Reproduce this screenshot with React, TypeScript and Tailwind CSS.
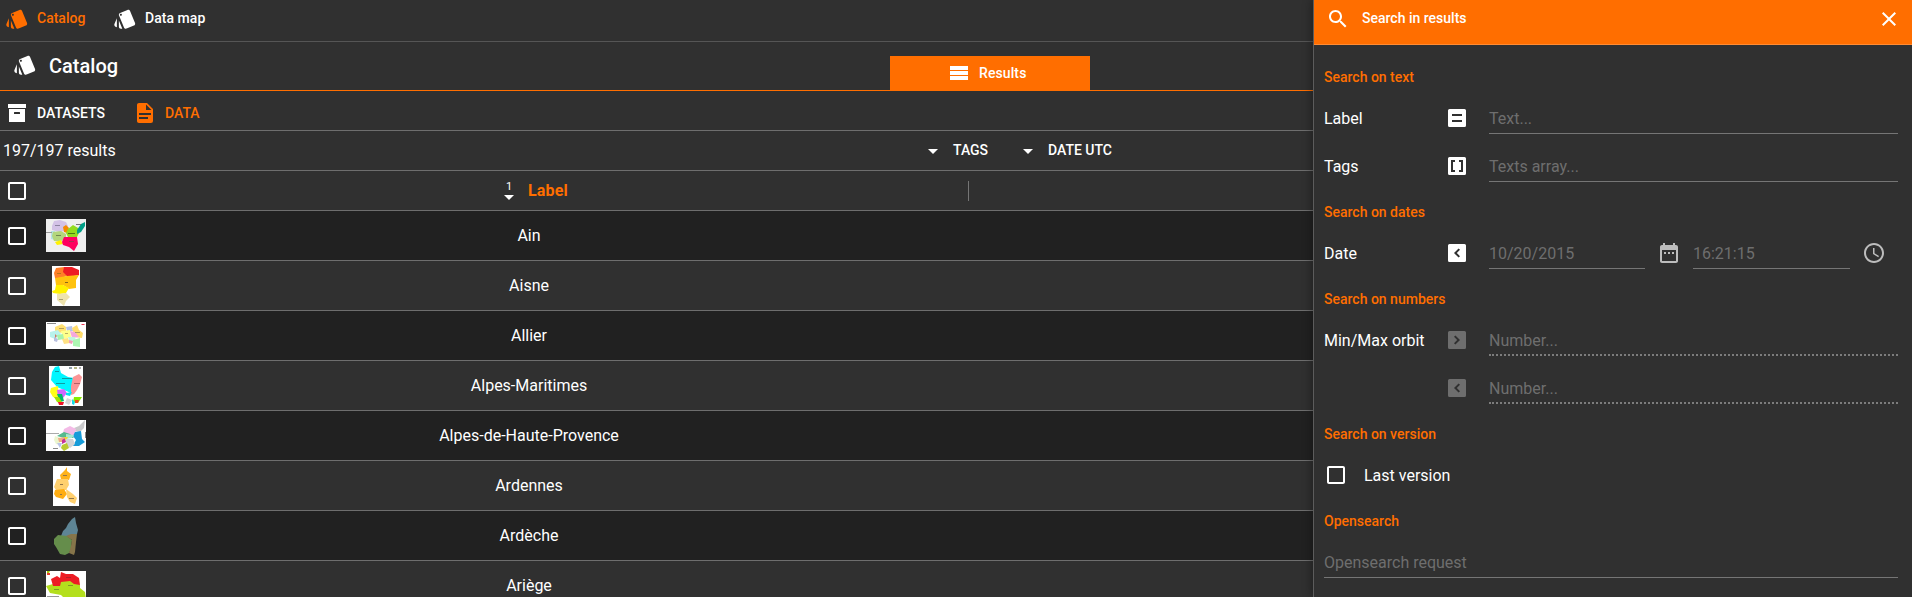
import React from "react";

const STYLE =
  "M2.53 19.65l1.34.56v-9.03l-2.43 5.86c-.41 1.02.08 2.19 1.09 2.61zm19.5-3.7L17.07 3.98c-.31-.75-1.04-1.21-1.81-1.23-.26 0-.53.04-.79.15L7.1 5.95c-.75.31-1.21 1.03-1.23 1.8-.01.27.04.54.15.8l4.96 11.97c.31.76 1.05 1.22 1.83 1.23.26 0 .52-.05.77-.15l7.36-3.05c1.02-.42 1.51-1.59 1.09-2.6zM7.88 8.75c-.55 0-1-.45-1-1s.45-1 1-1 1 .45 1 1-.45 1-1 1zm-2 11c0 1.1.9 2 2 2h1.45l-3.45-8.34v6.34z";
const ARCHIVE =
  "M3,3H21V7H3V3M4,8H20V21H4V8M9.5,11A0.5,0.5 0 0,0 9,11.5V13H15V11.5A0.5,0.5 0 0,0 14.5,11H9.5Z";
const FILE_DOC =
  "M13,9H18.5L13,3.5V9M6,2H14L20,8V20A2,2 0 0,1 18,22H6C4.89,22 4,21.1 4,20V4C4,2.89 4.89,2 6,2M15,18V16H6V18H15M18,14V12H6V14H18Z";
const SEQUENTIAL = "M3 5h18v4H3zM3 10h18v4H3zM3 15h18v4H3z";
const DROP = "M7 10l5 5 5-5z";
const SEARCH =
  "M15.5 14h-.79l-.28-.27C15.41 12.59 16 11.11 16 9.5 16 5.91 13.09 3 9.5 3S3 5.91 3 9.5 5.91 16 9.5 16c1.61 0 3.09-.59 4.23-1.57l.27.28v.79l5 4.99L20.49 19l-4.99-5zm-6 0C7.01 14 5 11.99 5 9.5S7.01 5 9.5 5 14 7.01 14 9.5 11.99 14 9.5 14z";
const CLOSE =
  "M19 6.41L17.59 5 12 10.59 6.41 5 5 6.41 10.59 12 5 17.59 6.41 19 12 13.41 17.59 19 19 17.59 13.41 12z";
const CHECKBOX =
  "M19 5v14H5V5h14m0-2H5c-1.1 0-2 .9-2 2v14c0 1.1.9 2 2 2h14c1.1 0 2-.9 2-2V5c0-1.1-.9-2-2-2z";
const BOX = "M4.5 3H19.5A1.5 1.5 0 0 1 21 4.5V19.5A1.5 1.5 0 0 1 19.5 21H4.5A1.5 1.5 0 0 1 3 19.5V4.5A1.5 1.5 0 0 1 4.5 3Z";
const OP = {
  eq: "M7 8H17V10H7ZM7 14H17V16H7Z",
  arr: "M6 6V18H10V16H8V8H10V6H6M16 16H14V18H18V6H14V8H16V16Z",
  gt: "M10.41 7.41L15 12L10.41 16.6L9 15.18L12.18 12L9 8.82L10.41 7.41Z",
  lt: "M13.59 7.41L9 12L13.59 16.6L15 15.18L11.82 12L15 8.82L13.59 7.41Z",
};
const CALENDAR =
  "M9 11H7v2h2v-2zm4 0h-2v2h2v-2zm4 0h-2v2h2v-2zm2-7h-1V2h-2v2H8V2H6v2H5c-1.11 0-1.99.9-1.99 2L3 20c0 1.1.89 2 2 2h14c1.1 0 2-.9 2-2V6c0-1.1-.9-2-2-2zm0 16H5V9h14v11z";
const CLOCK =
  "M11.99 2C6.47 2 2 6.48 2 12s4.47 10 9.99 10C17.52 22 22 17.52 22 12S17.52 2 11.99 2zM12 20c-4.42 0-8-3.58-8-8s3.58-8 8-8 8 3.58 8 8-3.58 8-8 8zM12.5 7H11v6l5.25 3.15.75-1.23-4.5-2.67z";

function Icon({ d, className = "" }: { d: string; className?: string }) {
  return (
    <svg viewBox="0 0 24 24" className={"size-6 shrink-0 fill-current " + className}>
      <path d={d} fillRule="evenodd" />
    </svg>
  );
}

type Shape = [fill: string, points: string];
type Thumb = { w: number; h: number; bg: string; shapes: Shape[] };

// Small district maps, drawn in pixel units
const rows: { name: string; thumb: Thumb }[] = [
  {
    name: "Ain",
    thumb: {
      w: 40, h: 33, bg: "#efefef",
      shapes: [
        ["#d3c2e6", "8,2 14,1 20,3 22,7 19,12 13,13 6,11 6,7"],
        ["#b5e3e6", "5,12 9,12 9,21 5,20"],
        ["#b3d67c", "7,13 15,12 20,15 20,20 15,22 8,22 6,17"],
        ["#f58a00", "17,8 20,6 23,9 21,14 18,13"],
        ["#92dc1e", "22,10 27,6 32,9 33,14 31,18 22,18 20,14"],
        ["#009f87", "35,5 39,3 39,7 35,13 31,15 31,11"],
        ["#fff200", "9,23 15,21 17,25 11,26"],
        ["#ff005f", "18,18 31,18 32,25 28,32 23,28 17,26 16,23"],
        ["#8d83a0", "9,6 14,6 14,7 9,7"],
        ["#72884f", "10,16 15,16 15,17 10,17"],
        ["#4f7a10", "22,14 29,14 29,15 22,15"],
        ["#777", "30,5 35,5 35,6 30,6"],
        ["#999", "0,13 6,13 6,14 0,14"],
        ["#a83050", "23,22 28,22 28,23 23,23"],
      ],
    },
  },
  {
    name: "Aisne",
    thumb: {
      w: 28, h: 40, bg: "#fff",
      shapes: [
        ["#ff7f27", "4,2 12,1 15,10 9,12 3,12 2,7"],
        ["#ed1c24", "12,1 20,1 27,4 27,9 22,10 15,10 11,6"],
        ["#ffc20e", "3,12 15,10 27,9 24,14 24,22 17,23 11,19 4,19"],
        ["#fff200", "4,19 11,19 17,22 14,27 8,28 1,27 0,25 3,24"],
        ["#eee3ad", "5,28 14,27 18,31 14,35 12,40 5,34"],
        ["#b77518", "5,7 9,7 9,8 5,8"],
        ["#886818", "13,16 16,16 16,17 13,17"],
        ["#a8a070", "7,33 11,33 11,34 7,34"],
      ],
    },
  },
  {
    name: "Allier",
    thumb: {
      w: 40, h: 27, bg: "#fff",
      shapes: [
        ["#ffe173", "9,5 16,2 20,5 20,10 12,11 9,9"],
        ["#b9f2ed", "4,10 12,8 15,12 9,17 4,15"],
        ["#b4c3ea", "20,5 26,4 27,9 21,9"],
        ["#ffdc6b", "26,6 31,3 33,8 37,11 36,16 29,15"],
        ["#ffff8a", "15,9 24,8 25,15 17,17"],
        ["#f5a9dc", "24,9 29,10 33,15 26,16"],
        ["#a8f3ac", "11,13 17,12 18,17 12,18"],
        ["#ffe183", "16,17 22,16 24,21 18,22"],
        ["#c0f6df", "22,15 29,15 30,19 24,20"],
        ["#adf7b2", "27,18 34,16 34,25 27,24"],
        ["#b8c0df", "8,15 12,17 11,20 8,19"],
        ["#f49eb8", "23,18 27,19 26,22 23,21"],
        ["#d27c65", "9,12 11,14 9,16"],
        ["#ed3754", "35,2 39,2 38,3 36,3"],
        ["#888", "1,1 10,1 10,2 1,2"],
        ["#b7a05a", "13,6 18,6 18,7 13,7"],
        ["#b7b064", "19,11 22,11 22,12 19,12"],
        ["#b0a060", "29,10 34,10 34,11 29,11"],
      ],
    },
  },
  {
    name: "Alpes-Maritimes",
    thumb: {
      w: 34, h: 40, bg: "#fff",
      shapes: [
        ["#00f6ff", "6,1 10,0 12,7 19,11 25,12 22,27 15,24 8,21 2,14 3,6"],
        ["#fb9596", "24,11 30,8 33,11 31,18 28,24 25,28 22,29 22,20"],
        ["#ffff18", "2,22 9,20 10,33 4,31 1,26"],
        ["#cf68ff", "8,24 15,23 18,27 14,32 9,31"],
        ["#00b96b", "8,28 13,28 15,35 11,36"],
        ["#9fe400", "5,31 10,31 14,38 8,36"],
        ["#00e5ef", "17,27 23,26 21,30 17,29"],
        ["#d7d7d7", "18,32 23,34 20,39 16,37"],
        ["#f01428", "9,36 15,36 14,39 10,39"],
        ["#86ec00", "25,31 33,31 29,37 24,36"],
        ["#ec4818", "26,34 30,34 29,37 26,37"],
        ["#16dae8", "23,33 26,36 25,39 23,38"],
        ["#93a2aa", "20,1 23,1 23,3 20,3"],
        ["#b6b783", "25,1 28,1 28,3 25,3"],
        ["#b3b3b3", "30,1 32,1 32,3 30,3"],
        ["#109ca3", "6,5 10,5 10,6 6,6"],
        ["#109ca3", "13,12 23,12 23,13 13,13"],
        ["#109ca3", "7,17 16,17 16,18 7,18"],
        ["#b55f63", "25,17 31,17 31,18 25,18"],
      ],
    },
  },
  {
    name: "Alpes-de-Haute-Provence",
    thumb: {
      w: 40, h: 31, bg: "#fff",
      shapes: [
        ["#c9c9cb", "28,8 33,6 39,0 38,8 34,12 29,11"],
        ["#f3bbe6", "18,9 24,6 30,9 29,15 23,16 17,13"],
        ["#169bd8", "29,12 35,11 36,19 39,22 33,26 27,26 30,20 27,16"],
        ["#56ba8d", "11,16 18,12 24,14 28,18 18,18"],
        ["#a7e8cf", "20,14 28,15 26,18 20,19"],
        ["#ecf6cf", "9,16 14,18 14,25 10,24 8,20"],
        ["#f1ac88", "12,18 19,17 18,22 13,22"],
        ["#c6339a", "16,20 19,18 20,22 16,24"],
        ["#efd837", "18,17 22,17 20,21"],
        ["#d2d3d5", "20,19 27,19 29,24 24,28 20,25"],
        ["#bacb31", "16,25 21,23 23,28 18,31 15,28"],
        ["#b9c4e9", "11,23 16,23 14,28"],
        ["#aaa", "0,13 13,13 13,14 0,14"],
        ["#888", "7,28 12,28 12,29 7,29"],
        ["#888", "39,12 40,12 40,18 39,18"],
      ],
    },
  },
  {
    name: "Ardennes",
    thumb: {
      w: 26, h: 40, bg: "#fff",
      shapes: [
        ["#ffb31b", "12,4 14,1 14,5 18,8 16,14 8,13 7,9"],
        ["#ffd06f", "4,13 15,13 16,19 13,24 3,24 1,21"],
        ["#ffad12", "2,24 11,23 14,28 10,33 3,31 1,28"],
        ["#ffd06f", "13,23 20,28 24,32 22,38 17,36 14,31"],
        ["#94764b", "10,9 14,9 14,10 10,10"],
        ["#94764b", "7,18 10,18 10,19 7,19"],
        ["#94764b", "7,28 9,28 9,29 7,29"],
        ["#94764b", "16,32 21,32 21,33 16,33"],
      ],
    },
  },
  {
    name: "Ardèche",
    thumb: {
      w: 26, h: 40, bg: "transparent",
      shapes: [
        ["#5e8595", "19,3 22,1 23,7 25,14 24,18 15,20 8,20 10,15 13,12 15,8"],
        ["#658d4b", "1,23 5,19 14,20 19,24 18,33 16,37 12,39 7,38 3,31 1,28"],
        ["#86754a", "13,20 18,18 24,18 23,26 22,36 21,39 16,37 18,30 19,24"],
      ],
    },
  },
  {
    name: "Ariège",
    thumb: {
      w: 40, h: 30, bg: "#fff",
      shapes: [
        ["#b4df1d", "0,15 7,13 15,10 27,9 34,14 34,17 39,21 40,28 19,28 15,24 4,22"],
        ["#ed1c24", "5,8 11,5 14,7 15,1 20,3 27,3 33,7 34,14 28,13 24,10 15,11 14,15 7,15"],
        ["#a5c814", "1,0 4,0 3,2 1,2"],
        ["#e53e2d", "1,2 4,2 4,4 1,4"],
        ["#b3202a", "20,6 25,6 25,7 20,7"],
        ["#7f9c25", "22,14 27,14 27,15 22,15"],
        ["#7f9c25", "8,18 13,18 13,19 8,19"],
        ["#999", "1,25 13,25 13,26 1,26"],
      ],
    },
  },
];

function Thumbnail({ t }: { t: Thumb }) {
  return (
    <svg width={t.w} height={t.h} viewBox={`0 0 ${t.w} ${t.h}`} className="block">
      <rect width={t.w} height={t.h} fill={t.bg} />
      {t.shapes.map(([fill, points], i) => (
        <polygon key={i} fill={fill} points={points} />
      ))}
    </svg>
  );
}

function Operator({ op, disabled = false }: { op: keyof typeof OP; disabled?: boolean }) {
  return (
    <Icon
      d={BOX + OP[op]}
      className={"mt-3 mr-5 " + (disabled ? "text-[#6e6e6e]" : "text-white")}
    />
  );
}

function Title({ children }: { children: React.ReactNode }) {
  return <h3 className="h-[39px] pt-3 text-sm leading-5 font-medium text-[#ff6e00]">{children}</h3>;
}

function Field({ text, className = "", dotted = false }: { text: string; className?: string; dotted?: boolean }) {
  return (
    <div
      className={
        "mt-3 h-[28px] pt-px leading-6 text-[#6e6e6e] " +
        (dotted ? "border-b-2 border-dotted border-[#7c7c7c] " : "border-b border-[#757575] ") +
        className
      }
    >
      {text}
    </div>
  );
}

function Criterion({ label, children }: { label?: string; children: React.ReactNode }) {
  return (
    <div className="flex h-12">
      <span className="w-[121px] shrink-0 pt-[13px] leading-6">{label}</span>
      {children}
    </div>
  );
}

export default function App() {
  return (
    <div className="flex h-[597px] w-[1912px] overflow-hidden bg-[#303030] font-[Roboto,sans-serif] text-base text-white">
      <main className="flex w-[1313px] shrink-0 flex-col">
        <nav className="flex h-[42px] shrink-0 items-start border-b border-[#555] pt-[7px] pl-[5px] text-sm leading-[22px] font-medium">
          <div className="flex w-[108px] gap-2 text-[#ff6e00]">
            <Icon d={STYLE} />
            Catalog
          </div>
          <div className="flex gap-2 tracking-[0.05px]">
            <Icon d={STYLE} />
            Data map
          </div>
        </nav>
        <header className="flex h-[49px] shrink-0 items-start border-b border-[#ff6e00]">
          <div className="flex w-[890px] pt-[11px] pl-[13px] text-xl leading-[26px] font-medium">
            <Icon d={STYLE} className="mr-3" />
            <h1>Catalog</h1>
          </div>
          <button className="mt-[14px] flex h-[34px] w-[200px] items-center gap-2 bg-[#ff6e00] pl-[57px] text-sm font-medium tracking-[0.1px]">
            <Icon d={SEQUENTIAL} />
            Results
          </button>
        </header>
        <div className="flex h-10 shrink-0 items-center border-b border-[#6e6e6e] pt-[5px] pl-[5px] text-sm font-medium">
          <div className="flex w-[128px] items-center gap-2">
            <Icon d={ARCHIVE} />
            DATASETS
          </div>
          <div className="flex items-center gap-2 text-[#ff6e00]">
            <Icon d={FILE_DOC} />
            DATA
          </div>
        </div>
        <div className="flex h-10 shrink-0 items-center border-b border-[#6e6e6e] pl-[3px]">
          <span className="w-[918px]">197/197 results</span>
          <div className="flex w-[95px] items-center gap-2 text-sm font-medium">
            <Icon d={DROP} />
            <span className="-mt-px">TAGS</span>
          </div>
          <div className="flex items-center gap-2 text-sm font-medium">
            <Icon d={DROP} />
            <span className="-mt-px">DATE UTC</span>
          </div>
        </div>
        <div className="flex h-10 shrink-0 items-center border-b border-[#6e6e6e] pl-[5px]">
          <Icon d={CHECKBOX} className="mt-px" />
          <div className="ml-[468px] flex w-[471px] items-center">
            <div className="flex w-6 flex-col items-center">
              <span className="h-[11px] text-[11px] leading-[11px]">1</span>
              <svg viewBox="0 0 10 5" className="mt-[3px] h-[5px] w-[10px] fill-white">
                <path d="M0 0h10L5 5z" />
              </svg>
            </div>
            <span className="ml-[7px] font-bold tracking-[0.15px] text-[#ff6e00]">Label</span>
          </div>
          <div className="h-5 w-px bg-[#757575]" />
        </div>
        {rows.map((r) => (
          <div
            key={r.name}
            className="flex h-[50px] shrink-0 items-center border-b border-[#6e6e6e] pl-[5px] odd:bg-[#303030] even:bg-[#212121]"
          >
            <Icon d={CHECKBOX} className="mt-px" />
            <div className={"ml-[17px] flex w-10 justify-center " + (r.thumb.h % 2 === 0 ? "mt-px" : "")}>
              <Thumbnail t={r.thumb} />
            </div>
            <span className="w-[886px] text-center">{r.name}</span>
          </div>
        ))}
      </main>
      <aside className="relative flex w-[599px] flex-col border-l border-[#5c5c5c] bg-[#303030] shadow-[0_0_10px_rgba(0,0,0,0.45)]">
        <div className="flex h-[45px] shrink-0 items-start border-b border-[#ff8b33] bg-[#ff6e00] pt-[7px] pr-[11px] pl-3 text-sm leading-[22px] font-medium">
          <Icon d={SEARCH} className="mr-3" />
          <span className="flex-1">Search in results</span>
          <Icon d={CLOSE} />
        </div>
        <div className="flex flex-col pt-[10px] pr-[14px] pl-[10px]">
          <Title>Search on text</Title>
          <Criterion label="Label">
            <Operator op="eq" />
            <Field text="Text..." className="flex-1" />
          </Criterion>
          <Criterion label="Tags">
            <Operator op="arr" />
            <Field text="Texts array..." className="flex-1" />
          </Criterion>
          <Title>Search on dates</Title>
          <Criterion label="Date">
            <Operator op="lt" />
            <Field text="10/20/2015" className="w-[156px]" />
            <Icon d={CALENDAR} className="mt-3 mr-3 ml-3 text-[#bdbdbd]" />
            <Field text="16:21:15" className="w-[157px]" />
            <Icon d={CLOCK} className="mt-3 ml-3 text-[#bdbdbd]" />
          </Criterion>
          <Title>Search on numbers</Title>
          <Criterion label="Min/Max orbit">
            <Operator op="gt" disabled />
            <Field text="Number..." className="flex-1" dotted />
          </Criterion>
          <Criterion>
            <Operator op="lt" disabled />
            <Field text="Number..." className="flex-1" dotted />
          </Criterion>
          <Title>Search on version</Title>
          <div className="flex h-12 items-center gap-4">
            <Icon d={CHECKBOX} />
            <span className="pt-0.5">Last version</span>
          </div>
          <Title>Opensearch</Title>
          <Field text="Opensearch request" />
        </div>
      </aside>
    </div>
  );
}
